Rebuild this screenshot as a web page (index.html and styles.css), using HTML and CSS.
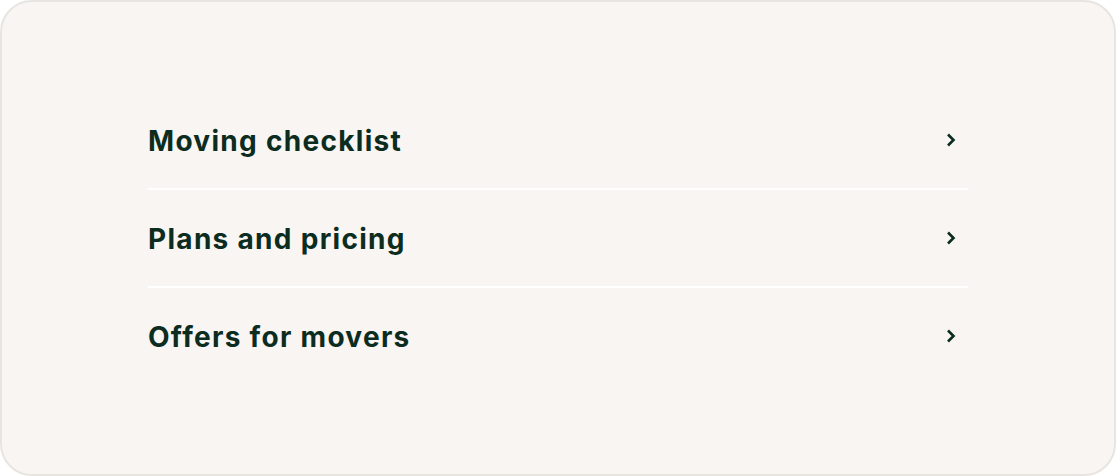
FILE: index.html
```html
<!DOCTYPE html>
<html lang="en">

<head>
  <meta charset="UTF-8">
  <meta name="viewport" content="width=device-width,initial-scale=1.0">
  <title>Links</title>
  <link rel="stylesheet" href="styles.css">
</head>

<body>
  <div class="panel">
    <ul class="links">
      <li class="link">
        <span>Moving checklist</span>
        <svg class="chevron" viewBox="0 0 10 14"><path d="M2 1.5 L7.5 7 L2 12.5" /></svg>
      </li>
      <li class="link">
        <span>Plans and pricing</span>
        <svg class="chevron" viewBox="0 0 10 14"><path d="M2 1.5 L7.5 7 L2 12.5" /></svg>
      </li>
      <li class="link">
        <span>Offers for movers</span>
        <svg class="chevron" viewBox="0 0 10 14"><path d="M2 1.5 L7.5 7 L2 12.5" /></svg>
      </li>
    </ul>
  </div>
</body>

</html>
```

FILE: styles.css
```css
body{
  margin: 0;
  font-family: Inter, "Noto Sans", sans-serif;
}
.panel{
  box-sizing: border-box;
  height: 476px;
  background: #f8f5f2;
  border: 2px solid #e8e5e1;
  border-radius: 32px;
  padding: 90px 146px;
}
.links{
  list-style: none;
  margin: 0;
  padding: 0;
}
.link{
  display: flex;
  justify-content: space-between;
  align-items: center;
  height: 96px;
  border-bottom: 2px solid #fff;
  color: #0b2c1e;
  font-size: 28px;
  font-weight: 700;
  letter-spacing: 1.3px;
}
.link span{
  padding-top: 2px; /* nudge text to match baseline */
}
.link:last-child{
  border-bottom: none;
}
.chevron{
  width: 10px;
  height: 14px;
  margin-right: 12px;
  fill: none;
  stroke: #0b2c1e;
  stroke-width: 2.6;
}
```
